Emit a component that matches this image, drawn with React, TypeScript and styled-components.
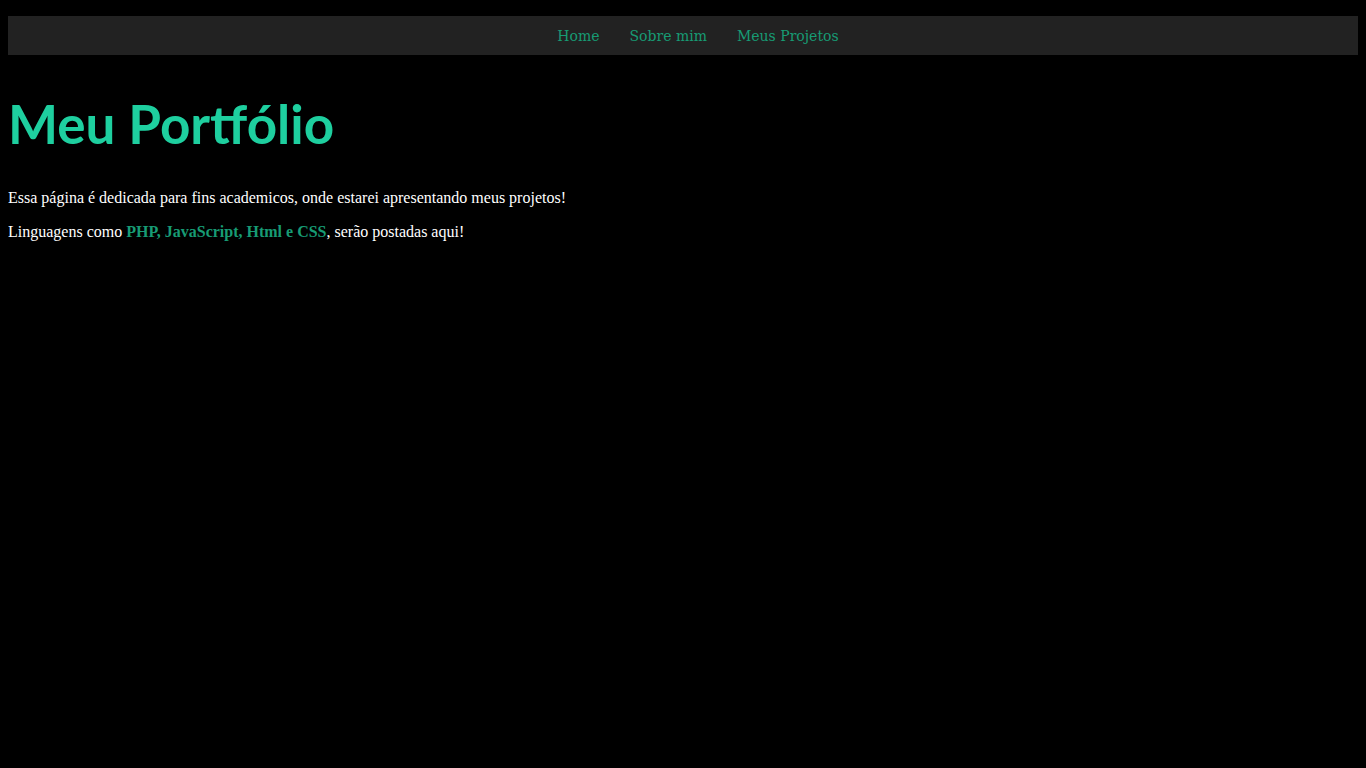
import React from "react";
import styled, { createGlobalStyle } from "styled-components";

const Global = createGlobalStyle`
  html, body { background: #000; }
  body {
    margin: 8px;
    color: #fff;
    font-family: "Liberation Serif", "Times New Roman", serif;
    font-size: 16px;
  }
`;

const Nav = styled.nav`
  margin-top: 8px;
  height: 39px;
  padding-left: 30px;
  background: #222222;
  display: flex;
  justify-content: center;
  align-items: center;
  gap: 30px;
`;

const NavLink = styled.a`
  color: #179b74;
  text-decoration: none;
  font-family: "DejaVu Serif", Georgia, serif;
  font-size: 14px;
  padding-top: 1px;
`;

const Title = styled.h1`
  margin: 37px 0 33px;
  color: #1ecf9f;
  font-family: Lato, "Open Sans", sans-serif;
  font-weight: 700;
  font-size: 53px;
  line-height: 64px;
`;

const Para = styled.p`
  margin: 16px 0;
  line-height: 18px;
`;

const Highlight = styled.strong`
  color: #179b74;
  font-weight: 700;
`;

export default function App() {
  return (
    <>
      <Global />
      <Nav>
        <NavLink href="#">Home</NavLink>
        <NavLink href="#">Sobre mim</NavLink>
        <NavLink href="#">Meus Projetos</NavLink>
      </Nav>
      <Title>Meu Portfólio</Title>
      <Para>Essa página é dedicada para fins academicos, onde estarei apresentando meus projetos!</Para>
      <Para>
        Linguagens como <Highlight>PHP, JavaScript, Html e CSS</Highlight>, serão postadas aqui!
      </Para>
    </>
  );
}
